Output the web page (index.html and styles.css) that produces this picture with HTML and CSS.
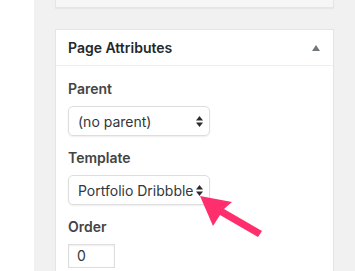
FILE: index.html
```html
<!DOCTYPE html>
<html lang="en">
<head>
    <meta charset="UTF-8">
    <meta name="viewport" content="width=device-width, initial-scale=1.0">
    <title>Page Attributes</title>
    <link rel="stylesheet" href="styles.css">
</head>
<body>
    <div class="sidebar"></div>
    <div class="main">
        <div class="box-top"></div>
        <div class="postbox">
            <div class="postbox-header">
                <h2>Page Attributes</h2>
                <svg class="toggle" width="8" height="6" viewBox="0 0 8 6"><polygon points="4,0 8,6 0,6" fill="#72777c"/></svg>
            </div>
            <div class="inside">
                <p class="label">Parent</p>
                <div class="select">
                    <span>(no parent)</span>
                    <svg class="updown" width="7" height="11" viewBox="0 0 7 11"><polygon points="3.5,0 7,4.5 0,4.5" fill="#2b2b2b"/><polygon points="0,6.5 7,6.5 3.5,11" fill="#2b2b2b"/></svg>
                </div>
                <p class="label">Template</p>
                <div class="select">
                    <span>Portfolio Dribbble</span>
                    <svg class="updown" width="7" height="11" viewBox="0 0 7 11"><polygon points="3.5,0 7,4.5 0,4.5" fill="#2b2b2b"/><polygon points="0,6.5 7,6.5 3.5,11" fill="#2b2b2b"/></svg>
                </div>
                <p class="label">Order</p>
                <div class="number">0</div>
            </div>
        </div>
    </div>

    <svg class="pointer" width="355" height="271" viewBox="0 0 355 271">
        <polygon points="200,196 232,202 224,209 262,231 258,237 220,215 213,226" fill="#ff2e6c"/>
    </svg>
</body>
</html>
```

FILE: styles.css
```css
body {
    margin: 0;
    width: 355px;
    height: 271px;
    overflow: hidden;
    display: flex;
    font-family: Inter, "Open Sans", sans-serif;
    color: #32373c;
}

.sidebar {
    width: 34px;
    background: #fff;
}

.main {
    flex: 1;
    display: flex;
    flex-direction: column;
    background: #f1f1f1;
    padding: 0 21px;
}

.box-top {
    height: 7px;
    background: #f6f6f6;
    border: 1px solid #e5e5e5;
    border-top: none;
    box-shadow: 0 1px 1px rgba(0, 0, 0, 0.04);
    margin-bottom: 21px;
}

.postbox {
    flex: 1;
    overflow: hidden;
    background: #fff;
    border: 1px solid #e5e5e5;
    border-bottom: none;
    box-shadow: 0 1px 1px rgba(0, 0, 0, 0.04);
}

.postbox-header {
    display: flex;
    justify-content: space-between;
    align-items: center;
    height: 35px;
    padding: 0 13px 0 12px;
    border-bottom: 1px solid #eee;
}

.postbox-header h2 {
    margin: 0;
    font-size: 14px;
    font-weight: 600;
    color: #23282d;
}

.toggle {
    margin-top: 1px;
}

.inside {
    padding: 1px 12px 0 12px;
}

.label {
    margin: 12px 0 7px;
    font-size: 14px;
    line-height: 20px;
    font-weight: 600;
    color: #444;
}

.select {
    width: 125px;
    height: 28px;
    border: 1px solid #ddd;
    border-radius: 5px;
    box-shadow: 0 1px 2px rgba(0, 0, 0, 0.07);
    display: flex;
    align-items: center;
    justify-content: space-between;
    padding: 0 6px 0 9px;
    font-size: 14px;
}

.number {
    width: 37px;
    height: 22px;
    border: 1px solid #ddd;
    box-shadow: inset 0 1px 2px rgba(0, 0, 0, 0.07);
    padding-left: 8px;
    font-size: 14px;
    line-height: 22px;
}

.pointer {
    position: absolute;
    top: 0;
    left: 0;
}
```
